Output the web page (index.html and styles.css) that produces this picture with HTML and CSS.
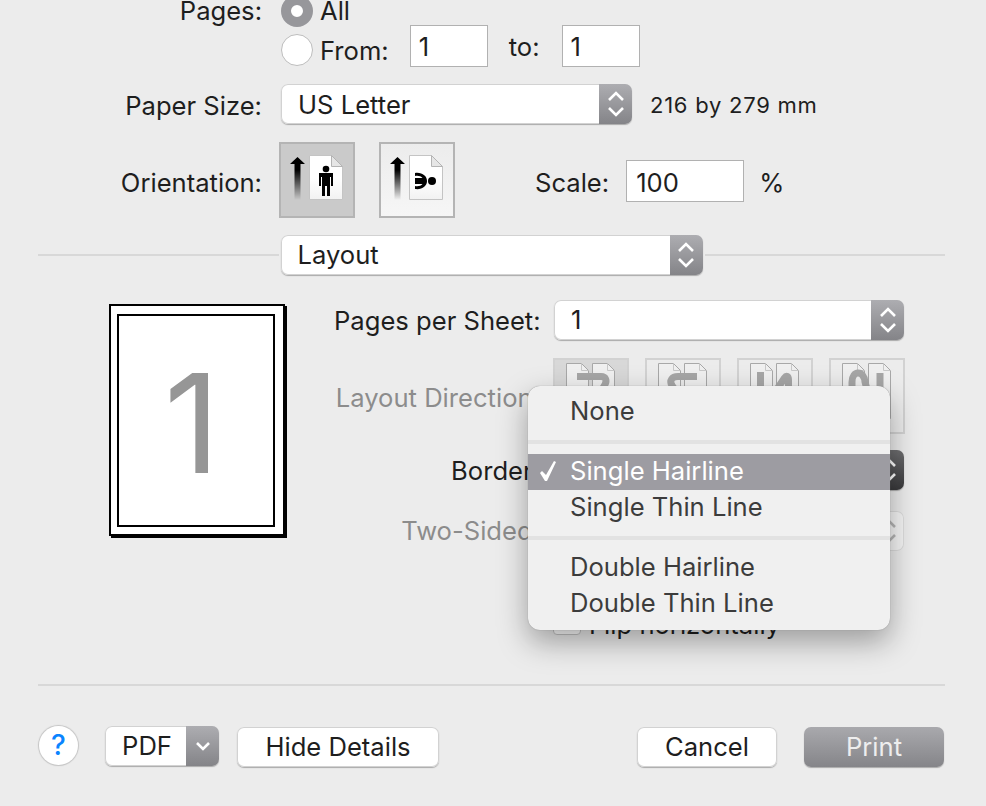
FILE: index.html
```html
<!DOCTYPE html>
<html lang="en">
<head>
    <meta charset="UTF-8">
    <meta name="viewport" content="width=device-width, initial-scale=1.0">
    <title>Print</title>
    <link rel="stylesheet" href="styles.css">
</head>
<body>
    <div class="dialog">
        <div class="row row-all">
            <span class="label">Pages:</span>
            <span class="radio radio-on"></span>
            <span class="radio-text">All</span>
        </div>
        <div class="row row-from">
            <span class="label"></span>
            <span class="radio"></span>
            <span class="radio-text">From:</span>
            <span class="field field-page field-from">1</span>
            <span class="to-text">to:</span>
            <span class="field field-page">1</span>
        </div>
        <div class="row row-paper">
            <span class="label">Paper Size:</span>
            <div class="select select-paper">
                <span class="select-text">US Letter</span>
                <span class="stepper"><svg width="18" height="28" viewBox="0 0 18 28"><path d="M2 10l7-7 7 7M2 18l7 7 7-7"/></svg></span>
            </div>
            <span class="paper-note">216 by 279 mm</span>
        </div>
        <div class="row row-orient">
            <span class="label">Orientation:</span>
            <span class="orient orient-on">
                <svg width="76" height="76" viewBox="0 0 76 76">
                    <defs>
                        <linearGradient id="arrowA" x1="0" y1="0" x2="0" y2="1"><stop offset="0.3" stop-color="#000"/><stop offset="1" stop-color="#000" stop-opacity="0"/></linearGradient>
                        <linearGradient id="paperA" x1="0" y1="0" x2="0" y2="1"><stop offset="0.5" stop-color="#fff"/><stop offset="1" stop-color="#f2f2f2"/></linearGradient>
                    </defs>
                    <path d="M11 22l7.500-7 7.500 7h-4.500v36h-6v-36z" fill="url(#arrowA)"/>
                    <path d="M30.500 13.500h22l11 11v33h-33z" fill="url(#paperA)" stroke="#c4c4c4"/>
                    <path d="M52.500 13.500v11h11z" fill="#e6e6e6" stroke="#b4b4b4"/>
                    <circle cx="47" cy="27" r="3.300"/>
                    <path d="M40 31h14v13h-2v-9h-1v19h-3v-10h-2v10h-3v-19h-1v9h-2z"/>
                </svg>
            </span>
            <span class="orient">
                <svg width="76" height="76" viewBox="0 0 76 76">
                    <defs>
                        <linearGradient id="arrowB" x1="0" y1="0" x2="0" y2="1"><stop offset="0.3" stop-color="#000"/><stop offset="1" stop-color="#000" stop-opacity="0"/></linearGradient>
                        <linearGradient id="paperB" x1="0" y1="0" x2="0" y2="1"><stop offset="0.5" stop-color="#fff"/><stop offset="1" stop-color="#f2f2f2"/></linearGradient>
                    </defs>
                    <path d="M11 22l7.500-7 7.500 7h-4.500v36h-6v-36z" fill="url(#arrowB)"/>
                    <path d="M30.500 13.500h22l11 11v33h-33z" fill="url(#paperB)" stroke="#c4c4c4"/>
                    <path d="M52.500 13.500v11h11z" fill="#e6e6e6" stroke="#b4b4b4"/>
                    <circle cx="53" cy="39" r="4"/>
                    <path d="M36 31c7-1 12 3 12 8s-5 9-12 8v-3c3 .5 6 0 7.500-2h-7.500v-6h7.500c-1.500-2-4.500-2.500-7.500-2z"/>
                </svg>
            </span>
            <span class="scale-label">Scale:</span>
            <span class="field field-scale">100</span>
            <span class="percent">%</span>
        </div>
        <div class="row row-layout">
            <span class="rule"></span>
            <div class="select select-layout">
                <span class="select-text">Layout</span>
                <span class="stepper"><svg width="18" height="28" viewBox="0 0 18 28"><path d="M2 10l7-7 7 7M2 18l7 7 7-7"/></svg></span>
            </div>
            <span class="rule"></span>
        </div>

        <div class="panel">
            <div class="preview">
                <div class="preview-inner">1</div>
            </div>
            <div class="options">
                <span class="opt-label">Pages per Sheet:</span>
                <div class="select">
                    <span class="select-text">1</span>
                    <span class="stepper"><svg width="18" height="28" viewBox="0 0 18 28"><path d="M2 10l7-7 7 7M2 18l7 7 7-7"/></svg></span>
                </div>

                <span class="opt-label opt-off opt-direction">Layout Direction:</span>
                <div class="directions">
                    <span class="dir dir-on"><svg width="76" height="76" viewBox="0 0 76 76"><path class="sheet" d="M13.500 5.500h15l7 7v48h-22zM39.500 5.500h15l7 7v48h-22z"/><path class="fold" d="M28.500 5.500v7h7M54.500 5.500v7h7"/><path class="turn" d="M24 18.500h24c5 0 6 4 4 8l-12 20"/></svg></span>
                    <span class="dir"><svg width="76" height="76" viewBox="0 0 76 76"><path class="sheet" d="M13.500 5.500h15l7 7v48h-22zM39.500 5.500h15l7 7v48h-22z"/><path class="fold" d="M28.500 5.500v7h7M54.500 5.500v7h7"/><path class="turn" d="M52 18.500h-19c-6 0-9 4-6 9l8 12"/></svg></span>
                    <span class="dir"><svg width="76" height="76" viewBox="0 0 76 76"><path class="sheet" d="M13.500 5.500h15l7 7v48h-22zM39.500 5.500h15l7 7v48h-22z"/><path class="fold" d="M28.500 5.500v7h7M54.500 5.500v7h7"/><path class="turn" d="M23.500 14v32h6c5 0 8-6 10-14l8-12c2-3 4-2 4 2v24"/></svg></span>
                    <span class="dir"><svg width="76" height="76" viewBox="0 0 76 76"><path class="sheet" d="M13.500 5.500h15l7 7v48h-22zM39.500 5.500h15l7 7v48h-22z"/><path class="fold" d="M28.500 5.500v7h7M54.500 5.500v7h7"/><path class="turn" d="M23 46V24c0-12 12-12 13 0l6 22M51 15v32"/></svg></span>
                </div>

                <span class="opt-label opt-border">Border:</span>
                <div class="select select-border">
                    <span class="select-text"></span>
                    <span class="stepper"><svg width="18" height="28" viewBox="0 0 18 28"><path d="M2 10l7-7 7 7M2 18l7 7 7-7"/></svg></span>
                </div>

                <span class="opt-label opt-off opt-sided">Two-Sided:</span>
                <div class="select select-off">
                    <span class="select-text"></span>
                    <span class="stepper"><svg width="18" height="28" viewBox="0 0 18 28"><path d="M2 10l7-7 7 7M2 18l7 7 7-7"/></svg></span>
                </div>

                <span></span>
                <div class="flip">
                    <span class="checkbox"></span>
                    <span>Flip horizontally</span>
                </div>
            </div>
        </div>

        <div class="menu">
            <div class="menu-item">None</div>
            <div class="menu-sep"></div>
            <div class="menu-item menu-item-on">
                <svg class="check" width="18" height="22" viewBox="0 0 18 22"><path d="M2 13l2-2 4 4 8-14 2 1-9 19h-2z"/></svg>
                Single Hairline
            </div>
            <div class="menu-item menu-item-up">Single Thin Line</div>
            <div class="menu-sep menu-sep-low"></div>
            <div class="menu-item">Double Hairline</div>
            <div class="menu-item">Double Thin Line</div>
        </div>

        <div class="footer">
            <span class="help">?</span>
            <div class="pdf">
                <span class="pdf-text">PDF</span>
                <span class="pdf-arrow"><svg width="16" height="10" viewBox="0 0 16 10"><path d="M2 2l6 6 6-6"/></svg></span>
            </div>
            <button class="btn btn-details">Hide Details</button>
            <span class="spacer"></span>
            <button class="btn">Cancel</button>
            <button class="btn btn-print">Print</button>
        </div>
    </div>
</body>
</html>
```

FILE: styles.css
```css
html, body {
    margin: 0;
    height: 806px;
    overflow: hidden;
}
body {
    background: #ececec;
    color: #1e1e1e;
    font-family: 'Inter', 'Liberation Sans', sans-serif;
    font-size: 25.6px;
}
.dialog {
    position: relative;
    width: 986px;
    height: 811px;
    margin-top: -5px;
    box-sizing: border-box;
    padding: 0 41px 0 38px;
}
.row {
    display: flex;
    align-items: center;
}
.label {
    flex: none;
    width: 224px;
    margin-right: 19px;
    text-align: right;
}
.row-all { height: 31px; margin-bottom: -1px; }
.row-all .label,
.row-all .radio-text {
    line-height: 20px;
    margin-top: 1px;
}
.row-from { height: 42px; }
.row-from .radio,
.row-from .radio-text {
    margin-top: 8px;
}
.row-paper { height: 40px; margin-top: 17px; }
.row-paper .label { margin-top: 2px; }
.row-orient { height: 76px; margin-top: 18px; }
.row-orient .label,
.scale-label,
.percent {
    margin-top: 4px;
}
.row-layout { height: 40px; margin-top: 17px; }

.radio {
    flex: none;
    width: 32px;
    height: 32px;
    box-sizing: border-box;
    border: 1px solid #bdbdbd;
    border-radius: 50%;
    background: #fff;
}
.radio-on {
    border: 10px solid #97979b;
}
.radio-text {
    margin-left: 7px;
}
.field {
    box-sizing: border-box;
    display: block;
    height: 42px;
    line-height: 42px;
    padding-left: 8px;
    background: #fff;
    border: 1px solid #b1b1b1;
}
.field-page { width: 78px; }
.field-from { margin-left: 21px; }
.to-text { margin: 0 22px 0 21px; }

.select {
    position: relative;
    flex: none;
    display: flex;
    box-sizing: border-box;
    height: 40px;
    background: #fff;
    border-radius: 7px;
    box-shadow: inset 0 0 0 1px #d2d2d2, 0 1px 1px #aaa;
    overflow: hidden;
}
.select-paper { width: 351px; }
.select-layout { width: 422px; margin: 0 2px; }
.select-text {
    flex: 1;
    padding-left: 17px;
    line-height: 40px;
}
.select-paper .select-text { line-height: 42px; }
.stepper {
    flex: none;
    width: 33px;
    display: flex;
    align-items: center;
    justify-content: center;
    background: linear-gradient(#adadb1, #848488);
}
.stepper svg path {
    fill: none;
    stroke: #fff;
    stroke-width: 2.600;
}
.select-border .stepper {
    background: linear-gradient(#6e6e70, #39393b);
}
.select-off {
    box-shadow: inset 0 0 0 1px #dcdcdc;
    background: #f5f5f5;
}
.select-off .stepper {
    background: none;
}
.select-off .stepper svg path {
    stroke: #b5b5b5;
}
.paper-note {
    margin: 2px 0 0 18px;
    font-size: 22px;
    letter-spacing: 0.75px;
}

.orient {
    flex: none;
    box-sizing: border-box;
    width: 76px;
    height: 76px;
    margin-left: 24px;
    border: 2px solid #b4b4b4;
    background: linear-gradient(#ececec, #f6f6f6);
}
.orient svg {
    display: block;
    margin: -2px;
}
.orient-on {
    margin-left: -2px;
    background: #cacaca;
}
.scale-label {
    margin-left: 80px;
}
.field-scale {
    width: 118px;
    margin: 2px 0 0 17px;
    padding-left: 9px;
    line-height: 44px;
}
.percent {
    margin-left: 15px;
}
.rule {
    flex: 1;
    height: 2px;
    background: #d8d8d8;
}

.panel {
    display: flex;
    align-items: flex-start;
    margin-top: 25px;
}
.preview {
    flex: none;
    box-sizing: border-box;
    width: 176px;
    height: 232px;
    margin: 4px 0 0 71px;
    padding: 8px 8px 7px 6px;
    background: #fff;
    border: 2px solid #000;
    box-shadow: 2px 2px 0 #000;
}
.preview-inner {
    box-sizing: border-box;
    height: 100%;
    padding-right: 8px;
    border: 2px solid #000;
    text-align: center;
    color: #969696;
    font-size: 138px;
    line-height: 214px;
}
.options {
    display: grid;
    grid-template-columns: 206px 350px;
    column-gap: 14px;
    align-items: center;
    margin-left: 49px;
}
.opt-label {
    text-align: right;
    white-space: nowrap;
}
.opt-off {
    color: #8c8c8c;
}
.opt-direction {
    align-self: start;
    margin-top: 42px;
}
.directions {
    display: flex;
    justify-content: space-between;
    width: 352px;
    margin: 18px 0 16px -1px;
}
.dir {
    box-sizing: border-box;
    width: 76px;
    height: 76px;
    border: 2px solid #d2d2d2;
}
.dir svg {
    display: block;
    margin: -2px;
}
.dir-on {
    background: #d8d8d8;
}
.sheet {
    fill: #f0f0f0;
    stroke: #a8a8a8;
}
.fold {
    fill: none;
    stroke: #c8c8c8;
}
.turn {
    fill: none;
    stroke: #a6a6a6;
    stroke-width: 7;
}
.opt-sided {
    margin-top: 19px;
}
.select-off {
    margin-top: 21px;
}
.flip {
    display: flex;
    align-items: center;
    gap: 8px;
    margin: 58px 0 0 -1px;
    height: 30px;
}
.checkbox {
    width: 26px;
    height: 20px;
    background: #fff;
    border: 1px solid #c4c4c4;
    border-radius: 4px;
}

.menu {
    position: absolute;
    left: 528px;
    top: 391px;
    width: 362px;
    height: 244px;
    box-sizing: border-box;
    padding-top: 7px;
    background: #f0f0f0;
    border-radius: 12px;
    color: #3c3c3c;
    box-shadow: 0 0 1px #777, 0 12px 30px rgba(0, 0, 0, 0.34);
}
.menu-item {
    position: relative;
    height: 36px;
    line-height: 36px;
    padding-left: 42px;
}
.menu-item-on {
    background: #9d9ca2;
    color: #fff;
    line-height: 34px;
}
.menu-item-up {
    line-height: 34px;
}
.check {
    position: absolute;
    left: 10px;
    top: 6px;
    fill: #fff;
}
.menu-sep {
    height: 4px;
    margin: 11px 0 10px;
    background: #e2e2e2;
}
.menu-sep-low {
    margin: 10px 0 9px;
}

.footer {
    display: flex;
    align-items: flex-start;
    position: absolute;
    left: 38px;
    right: 41px;
    top: 689px;
    height: 40px;
    padding-top: 40px;
    border-top: 2px solid #d8d8d8;
}
.help {
    flex: none;
    width: 39px;
    height: 39px;
    margin-left: 1px;
    border-radius: 50%;
    background: #fff;
    box-shadow: 0 0 1px 1px #c4c4c4;
    color: #0a84ff;
    font-size: 28px;
    font-weight: 500;
    text-align: center;
    line-height: 39px;
}
.pdf {
    display: flex;
    width: 114px;
    height: 40px;
    margin-left: 27px;
    border-radius: 7px;
    background: #fff;
    box-shadow: inset 0 0 0 1px #d2d2d2, 0 1px 1px #aaa;
    overflow: hidden;
}
.pdf-text {
    flex: 1;
    padding-left: 3px;
    text-align: center;
    line-height: 40px;
}
.pdf-arrow {
    flex: none;
    width: 33px;
    display: flex;
    align-items: center;
    justify-content: center;
    background: linear-gradient(#adadb1, #848488);
}
.pdf-arrow path {
    fill: none;
    stroke: #fff;
    stroke-width: 2.600;
}
.btn {
    height: 40px;
    width: 140px;
    margin-top: 1px;
    padding: 0 0 2px;
    border: none;
    border-radius: 7px;
    background: #fff;
    box-shadow: inset 0 0 0 1px #d2d2d2, 0 1px 1px #aaa;
    color: inherit;
    font: inherit;
}
.btn-details {
    width: 202px;
    margin-left: 18px;
}
.spacer {
    flex: 1;
}
.btn-print {
    margin: 1px 1px 0 27px;
    background: linear-gradient(#a9a9ad, #858589);
    color: #eee;
    box-shadow: 0 1px 1px #aaa;
}
```
